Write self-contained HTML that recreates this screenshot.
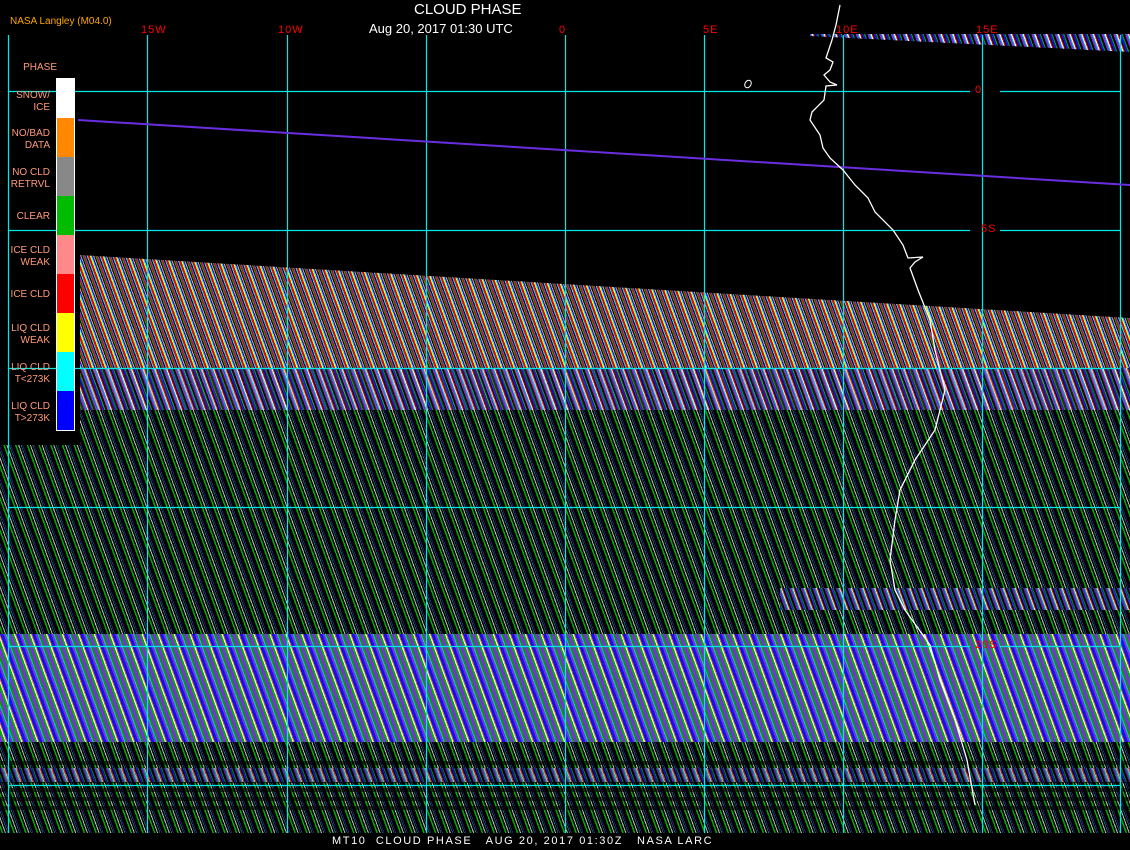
<!DOCTYPE html>
<html><head><meta charset="utf-8"><style>
*{margin:0;padding:0}
body{width:1130px;height:850px;background:#000;position:relative;overflow:hidden;font-family:"Liberation Sans",sans-serif}
.a{position:absolute}
.mid{background:repeating-linear-gradient(70deg,#000 0 2px,#0a0 2px 3.5px,#000 3.5px 5px,#bbb 5px 6px,#000 6px 7.5px,#0aa 7.5px 8px,#000 8px 9px,#5a22b0 9px 9.5px,#000 9.5px 11px)}
.low{background:repeating-linear-gradient(70deg,#7a2ee0 0 3px,#00b000 3px 5px,#fff 5px 6px,#e06a20 6px 7px,#1010f0 7px 10px,#7a2ee0 10px 12px,#0cc 12px 13px,#1a8a1a 13px 15px)}
.cld{background:repeating-linear-gradient(70deg,#e00 0 2px,#ff0 2px 3px,#0ee 3px 4px,#00e 4px 5px,#f88 5px 6px,#000 6px 7px,#0a0 7px 8px,#d00 8px 9px,#8040e0 9px 10px,#000 10px 11px,#0ee 11px 12px)}
.mix{background:repeating-linear-gradient(70deg,#1010e0 0 2px,#0a0 2px 3px,#000 3px 5px,#7a2ee0 5px 7px,#0cc 7px 8px,#fff 8px 9px,#e00 9px 10px,#000 10px 11px)}
.dark{background:repeating-linear-gradient(0deg,rgba(0,0,0,.75) 0 4px,transparent 4px 9px)}
.lab{color:#f00;font-size:11px;letter-spacing:1px}
.lg{color:#ff9a78;font-size:10px;text-align:right;width:50px;line-height:12px}
</style></head><body>
<div class="a cld" style="left:80px;top:250px;width:1050px;height:160px;clip-path:polygon(0 5px,1050px 68px,1050px 160px,0 160px)"></div>
<div class="a mix" style="left:80px;top:368px;width:1050px;height:45px;opacity:.8"></div>
<div class="a mid" style="left:0;top:410px;width:1130px;height:225px"></div>
<div class="a" style="left:0;top:410px;width:80px;height:35px;background:#000"></div>
<div class="a mix" style="left:780px;top:588px;width:350px;height:22px;opacity:.8"></div>
<div class="a low" style="left:0;top:634px;width:1130px;height:108px"></div>
<div class="a mid" style="left:0;top:742px;width:1130px;height:92px"></div>
<div class="a low dark" style="left:0;top:760px;width:1130px;height:50px;opacity:.8"></div>
<div class="a mix" style="left:0;top:768px;width:1130px;height:14px;opacity:.7"></div>
<div class="a mix" style="left:810px;top:34px;width:320px;height:18px;clip-path:polygon(0 0,320px 0,320px 18px,0 2px)"></div>
<div class="a" style="left:0;top:40px;width:78px;height:405px;background:#000"></div>
<svg class="a" style="left:0;top:0" width="1130" height="850">
<g stroke="#00e8e8" stroke-width="1.2" fill="none">
<path d="M8.5 35V835M147.5 35V835M287.5 35V835M426.5 35V835M565.5 35V835M704.5 35V835M843.5 35V835M982.5 35V835M1120.5 35V835"/>
<path d="M8 91.5H970M1000 91.5H1120M8 230.5H970M1000 230.5H1120M8 368.5H1120M8 507.5H1120M8 646.5H970M1000 646.5H1120M8 785.5H1120"/>
</g>
<path d="M78 120 L1130 185" stroke="#6a2ee0" stroke-width="2"/>
<path d="M840 5 L836 25 L832 40 L826 58 L833 62 L830 70 L824 75 L830 82 L837 85 L826 86 L824 100 L812 112 L810 120 L820 135 L823 148 L830 158 L843 170 L855 185 L868 198 L875 212 L893 230 L903 245 L908 258 L923 257 L915 262 L910 268 L918 290 L930 320 L935 350 L945 390 L935 430 L915 460 L900 490 L895 520 L890 560 L895 590 L905 610 L930 645 L940 680 L955 720 L967 760 L975 805" stroke="#fff" stroke-width="1.3" fill="none"/>
<ellipse cx="748" cy="84" rx="3" ry="4" stroke="#fff" fill="none" transform="rotate(30 748 84)"/>
<rect x="0" y="833" width="1130" height="17" fill="#000"/>
</svg>
<div class="a" style="left:10px;top:16px;color:#ffa500;font-size:10px">NASA Langley (M04.0)</div>
<div class="a" style="left:414px;top:1px;color:#fff;font-size:15px">CLOUD PHASE</div>
<div class="a" style="left:369px;top:21px;color:#fff;font-size:13px">Aug 20, 2017 01:30 UTC</div>
<div class="a lab" style="left:141px;top:24px">15W</div>
<div class="a lab" style="left:278px;top:24px">10W</div>
<div class="a lab" style="left:559px;top:24px">0</div>
<div class="a lab" style="left:703px;top:24px">5E</div>
<div class="a lab" style="left:836px;top:24px">10E</div>
<div class="a lab" style="left:976px;top:24px">15E</div>
<div class="a lab" style="left:975px;top:84px">0</div>
<div class="a lab" style="left:981px;top:223px">5S</div>
<div class="a lab" style="left:975px;top:639px">20S</div>
<div class="a lg" style="left:7px;top:62px">PHASE</div>
<div class="a" style="left:56px;top:78px;width:17px;height:351px;border:1px solid #fff;background:linear-gradient(#fff 0 39px,#f80 39px 78px,#888 78px 117px,#0b0 117px 156px,#f88 156px 195px,#f00 195px 234px,#ff0 234px 273px,#0ff 273px 312px,#00f 312px 351px)"></div>
<div class="a lg" style="left:0;top:90px">SNOW/<br>ICE</div>
<div class="a lg" style="left:0;top:128px">NO/BAD<br>DATA</div>
<div class="a lg" style="left:0;top:167px">NO CLD<br>RETRVL</div>
<div class="a lg" style="left:0;top:211px">CLEAR</div>
<div class="a lg" style="left:0;top:245px">ICE CLD<br>WEAK</div>
<div class="a lg" style="left:0;top:289px">ICE CLD</div>
<div class="a lg" style="left:0;top:323px">LIQ CLD<br>WEAK</div>
<div class="a lg" style="left:0;top:362px">LIQ CLD<br>T&lt;273K</div>
<div class="a lg" style="left:0;top:401px">LIQ CLD<br>T&gt;273K</div>
<div class="a" style="left:332px;top:835px;color:#fff;font-size:11px;letter-spacing:1.6px;white-space:pre">MT10  CLOUD PHASE   AUG 20, 2017 01:30Z   NASA LARC</div>
</body></html>
